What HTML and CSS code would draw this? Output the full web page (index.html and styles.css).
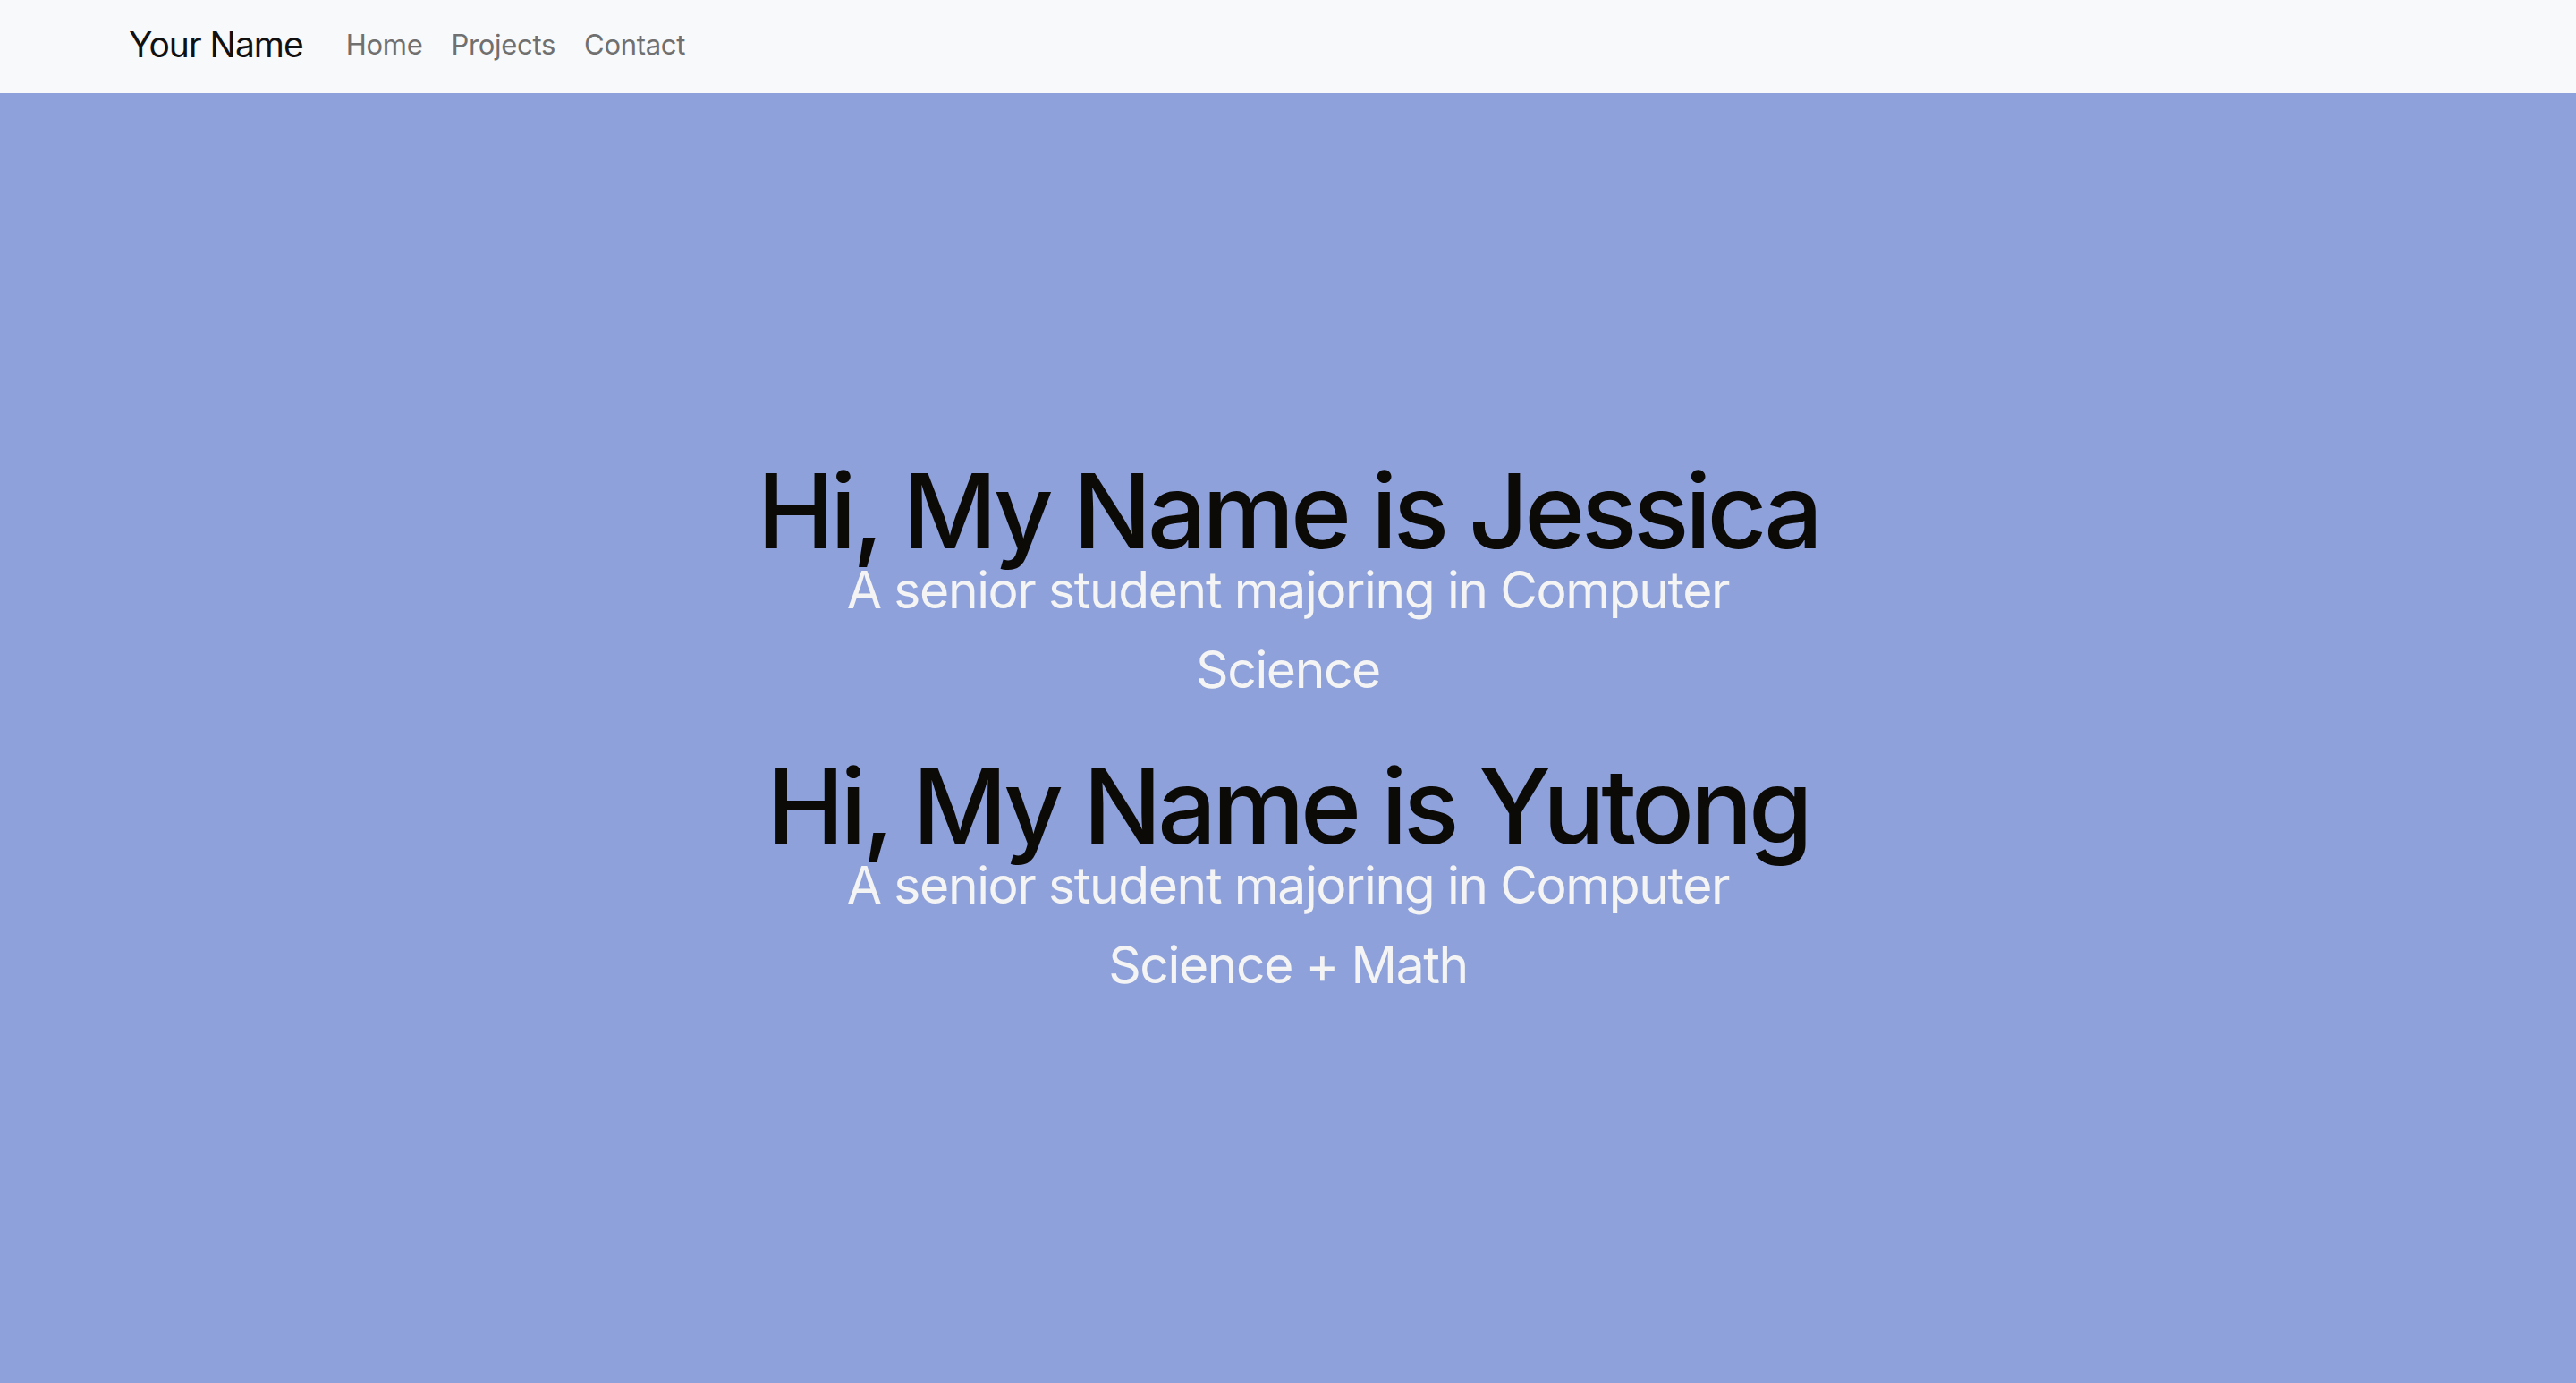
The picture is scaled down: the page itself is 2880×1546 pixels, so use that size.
FILE: index.html
```html
<!DOCTYPE html>
<html lang="en">
<head>
<meta charset="utf-8">
<title>Your Name</title>
<link rel="stylesheet" href="styles.css">
</head>
<body>
<nav class="navbar">
  <div class="container">
    <a class="brand" href="#">Your Name</a>
    <ul class="nav-links">
      <li><a href="#">Home</a></li>
      <li><a href="#">Projects</a></li>
      <li><a href="#">Contact</a></li>
    </ul>
  </div>
</nav>
<main class="hero">
  <div class="intro">
    <section class="intro-block">
      <h1 class="title">Hi, My Name is Jessica</h1>
      <p class="subtitle">A senior student majoring in Computer Science</p>
    </section>
    <section class="intro-block">
      <h1 class="title">Hi, My Name is Yutong</h1>
      <p class="subtitle">A senior student majoring in Computer Science + Math</p>
    </section>
  </div>
</main>
</body>
</html>
```
FILE: styles.css
```css
* { box-sizing: border-box; }
html, body { margin: 0; padding: 0; }
body {
  font-family: Inter, "Noto Sans", "Liberation Sans", sans-serif;
  height: 1546px;
  display: flex;
  flex-direction: column;
  background: #8ea1db;
}
.navbar {
  background: #f8f9fa;
  height: 104px;
  padding-bottom: 6px;
  flex: none;
  display: flex;
  align-items: center;
}
.container {
  width: 2640px;
  margin: 0 auto;
  padding: 0 24px;
  display: flex;
  align-items: center;
}
.brand {
  font-size: 39px;
  color: #111;
  text-decoration: none;
  margin-right: 32px;
  letter-spacing: -1px;
}
.nav-links {
  list-style: none;
  margin: 0;
  padding: 0;
  display: flex;
}
.nav-links a {
  display: block;
  padding: 0 16px;
  font-size: 31px;
  color: #707070;
  text-decoration: none;
  letter-spacing: -0.3px;
}
.hero {
  flex: 1;
  display: flex;
  align-items: center;
  justify-content: center;
}
.intro {
  display: flex;
  flex-direction: column;
  align-items: center;
  gap: 64px;
  text-align: center;
}
.title {
  margin: 0;
  font-size: 116px;
  font-weight: 500;
  line-height: 0.76;
  color: #0b0a06;
  letter-spacing: -4.5px;
}
.subtitle {
  margin: 0 auto;
  max-width: 1100px;
  font-size: 57px;
  line-height: 89px;
  color: #f4f4f4;
  letter-spacing: -1.4px;
}
```
